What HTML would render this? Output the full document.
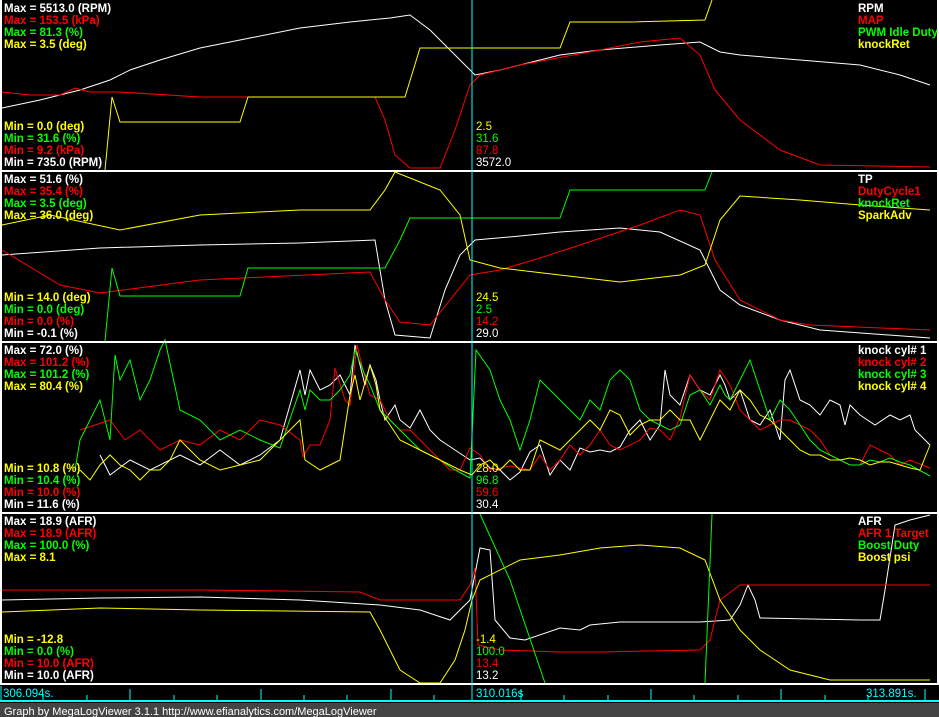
<!DOCTYPE html>
<html><head><meta charset="utf-8"><style>
html,body{margin:0;padding:0;background:#000;width:939px;height:717px;overflow:hidden}
svg{display:block}
text{font-family:"Liberation Sans",sans-serif;font-size:11.5px;font-weight:bold}
.v{font-weight:normal}
</style></head><body>
<svg width="939" height="717" viewBox="0 0 939 717" xmlns="http://www.w3.org/2000/svg">
<rect width="939" height="717" fill="#000"/>
<g fill="none" stroke-width="1">
<!-- panel 1 -->
<polyline stroke="#fff" points="2,108 40,100 80,90 110,80 130,70 160,60 200,48 250,38 300,28 350,22 390,18 410,15 430,30 450,50 475,75 500,70 520,65 560,55 600,50 660,45 700,42 720,52 740,55 800,60 860,65 900,75 930,85"/>
<polyline stroke="#f00" points="2,92 30,95 60,95 75,88 90,92 120,92 200,97 300,97 375,97 385,120 395,155 410,168 440,168 455,130 470,85 480,75 520,65 600,50 640,42 680,38 700,55 715,90 740,120 780,150 820,165 930,167"/>
<polyline stroke="#ff0" points="105,170 112,97 120,122 240,122 248,97 405,97 420,48 560,48 570,22 630,22 705,20 712,0"/>
<!-- panel 2 -->
<polyline stroke="#fff" points="2,255 100,248 200,245 300,243 375,240 385,300 395,335 430,338 445,290 460,255 475,240 520,236 560,232 620,228 660,232 700,250 720,290 740,305 780,320 820,330 930,338"/>
<polyline stroke="#f00" points="2,250 60,285 100,293 200,280 370,272 385,300 400,322 430,325 450,300 470,275 500,270 540,258 580,245 640,225 680,210 700,215 715,260 740,300 780,320 810,325 930,330"/>
<polyline stroke="#ff0" points="2,225 50,215 120,230 200,215 300,210 370,210 385,190 395,172 410,178 440,190 460,215 470,260 500,268 560,275 620,282 680,275 705,265 720,220 740,196 800,200 860,205 930,210"/>
<polyline stroke="#0f0" points="105,341 112,268 120,296 240,296 248,268 385,268 400,240 410,218 560,218 570,190 630,190 705,190 712,172"/>
<!-- panel 3 -->
<polyline stroke="#fff" points="100,455 110,475 130,460 150,470 180,455 200,465 220,450 240,465 260,455 280,440 300,370 305,395 310,370 320,390 330,385 340,375 350,395 355,345 365,385 370,365 376,380 380,400 385,420 395,405 400,420 410,428 420,410 430,430 440,440 455,450 470,460 480,458 490,468 500,470 510,480 520,472 530,452 540,445 550,475 560,460 570,470 580,448 590,452 600,450 610,452 620,447 630,430 640,420 650,440 660,425 665,370 670,395 680,405 690,375 700,390 710,395 720,375 725,385 730,400 740,390 750,420 760,425 770,410 780,440 785,380 790,370 800,400 810,405 820,415 830,400 840,405 845,425 850,405 860,415 875,425 890,415 900,420 910,415 915,430 925,440 930,445"/>
<polyline stroke="#f00" points="80,430 95,425 110,420 125,440 140,430 160,450 180,440 200,445 220,430 240,440 260,420 280,425 300,440 303,457 310,445 320,445 330,420 335,368 345,400 350,405 357,345 363,370 370,395 380,400 390,420 400,430 410,430 420,440 430,450 440,460 450,470 460,470 470,448 480,455 490,470 500,468 510,466 520,468 530,470 540,455 550,470 560,460 570,445 580,455 590,445 600,430 610,445 620,450 630,445 640,440 650,428 660,430 670,440 680,418 690,375 700,390 710,400 720,370 730,385 740,410 750,420 760,430 770,425 780,420 790,420 800,425 810,430 820,440 830,455 840,460 850,465 860,465 870,445 880,450 890,455 900,465 910,460 930,468"/>
<polyline stroke="#0f0" points="75,470 80,440 90,420 100,400 110,440 115,355 120,380 130,360 140,400 150,380 160,350 165,340 180,410 200,420 220,440 240,430 260,440 280,448 300,390 305,410 310,390 320,400 330,400 340,390 350,375 355,350 365,375 370,385 380,410 400,430 410,440 420,450 440,460 455,470 470,478 476,350 490,370 500,400 510,420 520,450 530,420 540,380 550,390 560,400 570,410 580,420 590,400 600,410 610,380 620,370 630,380 640,410 650,420 660,425 670,430 680,425 690,395 700,390 710,405 720,385 725,395 730,400 740,380 750,360 760,390 770,420 780,400 790,410 800,425 810,440 820,450 830,455 840,460 850,465 860,465 870,460 880,462 890,458 900,462 910,465 930,476"/>
<polyline stroke="#ff0" points="80,470 90,480 100,465 110,455 120,465 130,470 140,480 150,470 160,470 170,460 180,440 190,450 200,460 220,470 240,465 260,460 280,440 300,420 305,460 320,470 340,460 350,395 355,375 360,400 370,365 376,385 380,410 390,425 400,440 420,450 440,460 460,470 472,475 480,465 490,460 500,470 510,460 520,470 530,470 540,440 550,445 560,450 570,440 580,430 590,420 600,430 610,410 620,415 630,435 640,425 650,420 660,420 670,410 680,420 690,420 700,440 710,420 720,400 730,410 740,390 750,400 760,415 770,420 780,430 790,440 800,450 810,455 820,455 830,460 840,460 850,458 860,460 870,465 880,462 890,462 900,465 910,468 920,470 930,445"/>
<!-- panel 4 -->
<polyline stroke="#fff" points="2,600 100,598 200,597 300,600 380,605 420,610 450,620 470,600 480,548 490,550 495,620 510,638 525,640 560,628 580,630 590,625 620,622 700,622 730,620 740,605 748,585 755,600 760,618 860,620 880,620 885,590 895,525 910,520 930,515"/>
<polyline stroke="#f00" points="2,590 200,590 360,592 380,600 460,600 470,585 475,568 478,645 500,650 560,652 600,652 700,650 710,640 720,600 740,585 930,585"/>
<polyline stroke="#ff0" points="2,612 100,608 200,610 370,612 380,630 400,670 420,683 440,683 455,660 465,630 472,600 480,580 520,560 560,555 600,548 640,545 680,548 705,560 720,600 740,630 760,650 790,670 830,680 930,680"/>
<polyline stroke="#0f0" points="480,514 510,580 545,683"/>
<polyline stroke="#0f0" points="705,683 712,514"/>
</g>
<!-- separators -->
<g stroke="#fff" stroke-width="2">
<line x1="0" y1="171" x2="939" y2="171"/>
<line x1="0" y1="342" x2="939" y2="342"/>
<line x1="0" y1="513" x2="939" y2="513"/>
<line x1="0" y1="684" x2="939" y2="684"/>
<line x1="1" y1="0" x2="1" y2="684"/>
<line x1="938" y1="0" x2="938" y2="684"/>
</g>
<line x1="472" y1="0" x2="472" y2="702" stroke="#0ff" stroke-width="1"/>
<!-- axis -->
<line x1="0" y1="701" x2="939" y2="701" stroke="#0ff" stroke-width="2"/>
<g stroke="#0ff" stroke-width="1">
<line x1="1" y1="686" x2="1" y2="701"/><line x1="43" y1="695" x2="43" y2="701"/><line x1="87" y1="695" x2="87" y2="701"/><line x1="130" y1="689" x2="130" y2="701"/><line x1="174" y1="695" x2="174" y2="701"/><line x1="217" y1="695" x2="217" y2="701"/><line x1="261" y1="689" x2="261" y2="701"/>
<line x1="304" y1="695" x2="304" y2="701"/><line x1="347" y1="695" x2="347" y2="701"/><line x1="391" y1="689" x2="391" y2="701"/><line x1="434" y1="695" x2="434" y2="701"/><line x1="521" y1="689" x2="521" y2="701"/><line x1="564" y1="695" x2="564" y2="701"/><line x1="608" y1="695" x2="608" y2="701"/><line x1="651" y1="689" x2="651" y2="701"/><line x1="694" y1="695" x2="694" y2="701"/><line x1="738" y1="695" x2="738" y2="701"/><line x1="781" y1="689" x2="781" y2="701"/><line x1="825" y1="695" x2="825" y2="701"/><line x1="868" y1="695" x2="868" y2="701"/><line x1="925" y1="689" x2="925" y2="701"/>
</g>
<g fill="#0ff" class="v" style="font-weight:normal">
<text x="3" y="697" class="v">306.094s.</text>
<text x="476" y="697" class="v">310.016s</text>
<text x="866" y="697" class="v">313.891s.</text>
</g>
<rect x="0" y="703" width="939" height="14" fill="#444"/>
<text x="4" y="715" fill="#fff" class="v" style="font-size:11px">Graph by MegaLogViewer 3.1.1 http://www.efianalytics.com/MegaLogViewer</text>
<!-- panel 1 labels -->
<text x="4" y="12" fill="#fff">Max = 5513.0 (RPM)</text>
<text x="4" y="24" fill="#f00">Max = 153.5 (kPa)</text>
<text x="4" y="36" fill="#0f0">Max = 81.3 (%)</text>
<text x="4" y="48" fill="#ff0">Max = 3.5 (deg)</text>
<text x="4" y="130" fill="#ff0">Min = 0.0 (deg)</text>
<text x="4" y="142" fill="#0f0">Min = 31.6 (%)</text>
<text x="4" y="154" fill="#f00">Min = 9.2 (kPa)</text>
<text x="4" y="166" fill="#fff">Min = 735.0 (RPM)</text>
<text x="858" y="12" fill="#fff">RPM</text>
<text x="858" y="24" fill="#f00">MAP</text>
<text x="858" y="36" fill="#0f0">PWM Idle Duty</text>
<text x="858" y="48" fill="#ff0">knockRet</text>
<text x="476" y="130" fill="#ff0" class="v">2.5</text>
<text x="476" y="142" fill="#0f0" class="v">31.6</text>
<text x="476" y="154" fill="#f00" class="v">87.8</text>
<text x="476" y="166" fill="#fff" class="v">3572.0</text>
<!-- panel 2 labels -->
<text x="4" y="183" fill="#fff">Max = 51.6 (%)</text>
<text x="4" y="195" fill="#f00">Max = 35.4 (%)</text>
<text x="4" y="207" fill="#0f0">Max = 3.5 (deg)</text>
<text x="4" y="219" fill="#ff0">Max = 36.0 (deg)</text>
<text x="4" y="301" fill="#ff0">Min = 14.0 (deg)</text>
<text x="4" y="313" fill="#0f0">Min = 0.0 (deg)</text>
<text x="4" y="325" fill="#f00">Min = 0.0 (%)</text>
<text x="4" y="337" fill="#fff">Min = -0.1 (%)</text>
<text x="858" y="183" fill="#fff">TP</text>
<text x="858" y="195" fill="#f00">DutyCycle1</text>
<text x="858" y="207" fill="#0f0">knockRet</text>
<text x="858" y="219" fill="#ff0">SparkAdv</text>
<text x="476" y="301" fill="#ff0" class="v">24.5</text>
<text x="476" y="313" fill="#0f0" class="v">2.5</text>
<text x="476" y="325" fill="#f00" class="v">14.2</text>
<text x="476" y="337" fill="#fff" class="v">29.0</text>
<!-- panel 3 labels -->
<text x="4" y="354" fill="#fff">Max = 72.0 (%)</text>
<text x="4" y="366" fill="#f00">Max = 101.2 (%)</text>
<text x="4" y="378" fill="#0f0">Max = 101.2 (%)</text>
<text x="4" y="390" fill="#ff0">Max = 80.4 (%)</text>
<text x="4" y="472" fill="#ff0">Min = 10.8 (%)</text>
<text x="4" y="484" fill="#0f0">Min = 10.4 (%)</text>
<text x="4" y="496" fill="#f00">Min = 10.0 (%)</text>
<text x="4" y="508" fill="#fff">Min = 11.6 (%)</text>
<text x="858" y="354" fill="#fff">knock cyl# 1</text>
<text x="858" y="366" fill="#f00">knock cyl# 2</text>
<text x="858" y="378" fill="#0f0">knock cyl# 3</text>
<text x="858" y="390" fill="#ff0">knock cyl# 4</text>
<text x="476" y="472" fill="#ff0" class="v">28.0</text>
<text x="476" y="484" fill="#0f0" class="v">96.8</text>
<text x="476" y="496" fill="#f00" class="v">59.6</text>
<text x="476" y="508" fill="#fff" class="v">30.4</text>
<!-- panel 4 labels -->
<text x="4" y="525" fill="#fff">Max = 18.9 (AFR)</text>
<text x="4" y="537" fill="#f00">Max = 18.9 (AFR)</text>
<text x="4" y="549" fill="#0f0">Max = 100.0 (%)</text>
<text x="4" y="561" fill="#ff0">Max = 8.1</text>
<text x="4" y="643" fill="#ff0">Min = -12.8</text>
<text x="4" y="655" fill="#0f0">Min = 0.0 (%)</text>
<text x="4" y="667" fill="#f00">Min = 10.0 (AFR)</text>
<text x="4" y="679" fill="#fff">Min = 10.0 (AFR)</text>
<text x="858" y="525" fill="#fff">AFR</text>
<text x="858" y="537" fill="#f00">AFR 1 Target</text>
<text x="858" y="549" fill="#0f0">Boost Duty</text>
<text x="858" y="561" fill="#ff0">Boost psi</text>
<text x="476" y="643" fill="#ff0" class="v">-1.4</text>
<text x="476" y="655" fill="#0f0" class="v">100.0</text>
<text x="476" y="667" fill="#f00" class="v">13.4</text>
<text x="476" y="679" fill="#fff" class="v">13.2</text>
</svg>
</body></html>
